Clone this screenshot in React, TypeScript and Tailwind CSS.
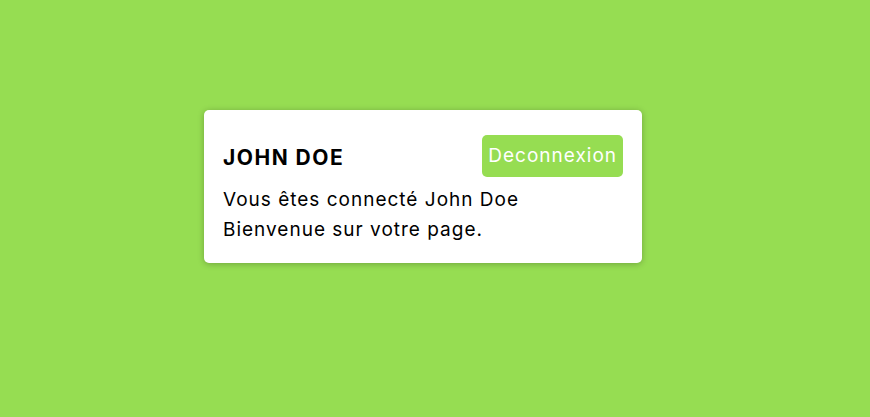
export default function App() {
  return (
    <div
      className="min-h-screen w-full bg-[#96dd52] pl-[204px] pt-[110px]"
      style={{ fontFamily: 'Inter, "Open Sans", sans-serif' }}
    >
      <div className="flex w-[438px] flex-col rounded-[5px] bg-white px-[19px] pt-[25px] pb-[18px] text-black shadow-[0_1px_6px_rgba(0,0,0,0.25)]">
        <div className="flex items-center justify-between">
          <h2 className="pt-[3px] text-[21px] font-bold tracking-[1.5px]">JOHN DOE</h2>
          <button className="h-[42px] rounded-[5px] bg-[#96dd52] px-[6px] pt-[1px] text-[19px] tracking-[1px] text-white">
            Deconnexion
          </button>
        </div>
        <p className="mt-[8px] text-[19px] leading-[30px] tracking-[1px]">Vous êtes connecté John Doe</p>
        <p className="text-[19px] leading-[30px] tracking-[1px]">Bienvenue sur votre page.</p>
      </div>
    </div>
  )
}
